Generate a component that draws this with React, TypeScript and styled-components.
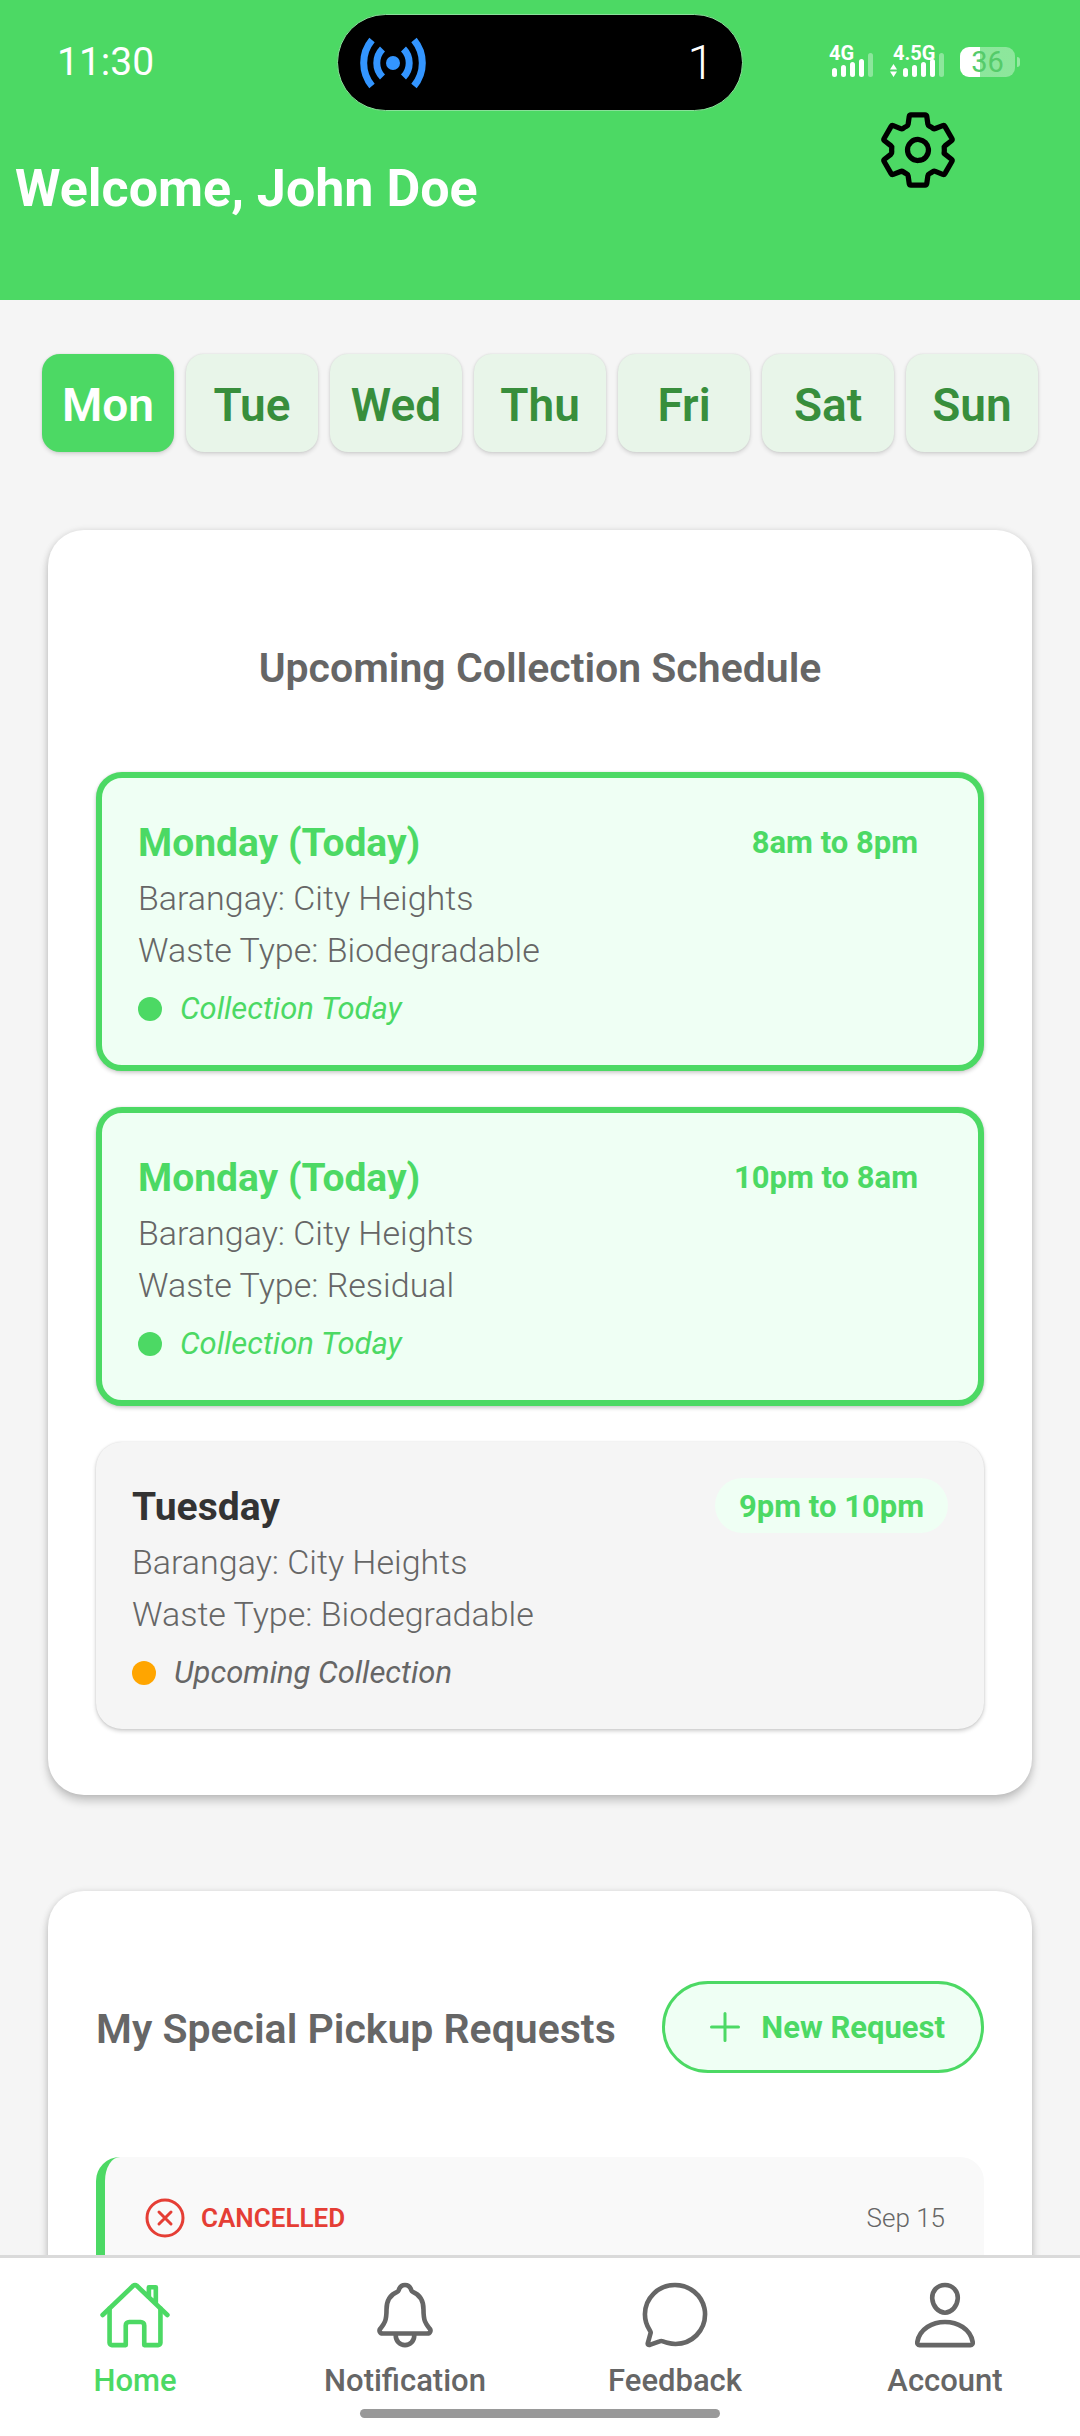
import React from 'react';
import styled, { createGlobalStyle, css } from 'styled-components';
import {
  IoAddOutline,
  IoChatbubbleOutline,
  IoCloseCircleOutline,
  IoHomeOutline,
  IoNotificationsOutline,
  IoPersonOutline,
  IoSettingsOutline,
} from 'react-icons/io5';

const green = '#4CD964';
const mint = '#EFFFF4';
const grey = '#666666';

const GlobalStyle = createGlobalStyle`
  * { box-sizing: border-box; }
  body {
    margin: 0;
    background: #f5f5f5;
    font-family: Roboto, 'Liberation Sans', sans-serif;
    -webkit-font-smoothing: antialiased;
  }
  h1, h2, h3, p, ul { margin: 0; padding: 0; }
  ul { list-style: none; }
  button { font-family: inherit; cursor: pointer; }
`;

const Screen = styled.div`
  display: flex;
  flex-direction: column;
  height: 100vh;
  overflow: hidden;
`;

const Header = styled.header`
  flex: none;
  height: 300px;
  background: ${green};
  color: #fff;
`;

const StatusBar = styled.div`
  display: grid;
  grid-template-columns: 1fr 406px 1fr;
  grid-template-rows: 91px;
  align-items: center;
  padding-top: 17px;
`;

const Clock = styled.time`
  padding: 0 0 2px 57px;
  font-size: 39px;
  line-height: 48px;
`;

const Island = styled.div`
  display: flex;
  align-items: center;
  justify-content: space-between;
  height: 97px;
  padding: 0 28px 0 20px;
  border: 1px solid #8ae09a;
  border-radius: 49px;
  background: #000;
  font-size: 48px;
  font-weight: 300;
`;

const Indicators = styled.div`
  display: flex;
  justify-content: flex-end;
  align-items: flex-end;
  gap: 16px;
  padding: 0 60px 2px 0;
`;

const Signal = styled.div`
  display: flex;
  flex-direction: column;
  font-size: 20px;
  font-weight: 700;
  line-height: 14px;
`;

const SignalLabel = styled.span<{ $indent?: boolean }>`
  margin-bottom: -7px;
  padding-left: ${(p) => (p.$indent ? '4px' : '0')};
`;

const Battery = styled.div`
  display: flex;
  align-items: center;
  gap: 2px;
  &::after {
    content: '';
    width: 3px;
    height: 10px;
    border-radius: 0 3px 3px 0;
    background: rgba(255, 255, 255, 0.4);
  }
`;

const BatteryCell = styled.div`
  width: 55px;
  height: 30px;
  border-radius: 9px;
  background: linear-gradient(to right, #fff 36%, rgba(255, 255, 255, 0.36) 36%);
  color: #55cb6a;
  font-size: 29px;
  line-height: 31px;
  text-align: center;
`;

const Greeting = styled.div`
  display: flex;
  align-items: flex-start;
  justify-content: space-between;
  padding: 0 120px 0 15px;
`;

const Welcome = styled.h1`
  padding-top: 51px;
  font-size: 52px;
  font-weight: 700;
  line-height: 60px;
`;

const SettingsButton = styled.button`
  display: flex;
  padding: 0;
  border: 0;
  background: none;
  color: #000;
`;

const Content = styled.main`
  flex: 1;
  min-height: 0;
  overflow: hidden auto;
  scrollbar-width: none;
  padding: 54px 48px 0;
`;

const Days = styled.div`
  display: grid;
  grid-template-columns: repeat(7, 1fr);
  gap: 12px;
  margin: 0 -6px 78px;
`;

const Day = styled.button<{ $active: boolean }>`
  height: 98px;
  padding: 4px 0 0;
  border: 0;
  border-radius: 18px;
  background: ${(p) => (p.$active ? green : '#E8F5E9')};
  color: ${(p) => (p.$active ? '#fff' : '#388E3C')};
  font-size: 46px;
  font-weight: 600;
  box-shadow: 0 2px 4px rgba(0, 0, 0, 0.14), 0 0 2px rgba(0, 0, 0, 0.1);
`;

const Card = styled.section`
  margin-bottom: 96px;
  padding: 90px 48px 66px;
  border-radius: 36px;
  background: #fff;
  box-shadow: 0 6px 10px rgba(0, 0, 0, 0.2), 0 0 6px rgba(0, 0, 0, 0.1);
`;

const CardTitle = styled.h2<{ $centered?: boolean }>`
  padding-top: 3px;
  color: ${grey};
  font-size: 41px;
  font-weight: 600;
  line-height: 58px;
  ${(p) =>
    p.$centered &&
    css`
      padding: 19px 0 75px;
      text-align: center;
    `}
`;

const Schedule = styled.ul`
  display: flex;
  flex-direction: column;
  gap: 36px;
`;

const Pickup = styled.li<{ $today: boolean }>`
  padding: 36px;
  border: ${(p) => (p.$today ? `6px solid ${green}` : '0')};
  border-radius: 26px;
  background: ${(p) => (p.$today ? mint : '#f5f5f5')};
  box-shadow: 0 2px 4px rgba(0, 0, 0, 0.2), 0 0 2px rgba(0, 0, 0, 0.1);
`;

const PickupHead = styled.div`
  display: flex;
  align-items: center;
  justify-content: space-between;
  margin-bottom: 3px;
`;

const PickupDay = styled.h3<{ $today: boolean }>`
  padding-top: 2px;
  color: ${(p) => (p.$today ? green : '#333')};
  font-size: 39px;
  font-weight: 700;
`;

const Hours = styled.span`
  padding: 10px 24px 8px;
  border-radius: 28px;
  background: ${mint};
  color: ${green};
  font-size: 31px;
  font-weight: 700;
  line-height: 37px;
`;

const Detail = styled.p`
  color: ${grey};
  font-size: 34px;
  font-weight: 300;
  line-height: 52px;
`;

const Status = styled.p<{ $today: boolean }>`
  display: flex;
  align-items: center;
  gap: 18px;
  margin-top: 13px;
  color: ${(p) => (p.$today ? green : grey)};
  font-size: 31px;
  font-style: italic;
  line-height: 40px;
  &::before {
    content: '';
    width: 24px;
    height: 24px;
    border-radius: 50%;
    background: ${(p) => (p.$today ? green : '#FFA500')};
  }
`;

const CardHead = styled.div`
  display: flex;
  align-items: center;
  justify-content: space-between;
  margin-bottom: 84px;
`;

const NewRequest = styled.button`
  display: flex;
  align-items: center;
  gap: 12px;
  height: 92px;
  padding: 0 36px;
  border: 3px solid ${green};
  border-radius: 46px;
  background: ${mint};
  color: ${green};
  font-size: 31px;
  font-weight: 700;
`;

const Request = styled.article`
  display: flex;
  align-items: center;
  justify-content: space-between;
  padding: 37px 39px 96px 36px;
  border-left: 9px solid ${green};
  border-radius: 24px;
  background: #f9f9f9;
`;

const RequestState = styled.span`
  display: flex;
  align-items: center;
  gap: 12px;
  color: #E53E35;
  font-size: 26px;
  font-weight: 600;
`;

const RequestDate = styled.time`
  color: ${grey};
  font-size: 26px;
  font-weight: 300;
`;

const BottomBar = styled.footer`
  flex: none;
  padding-bottom: 18px;
  border-top: 3px solid #dadada;
  background: #fff;
  z-index: 1;
`;

const Tabs = styled.nav`
  display: grid;
  grid-template-columns: repeat(4, 1fr);
`;

const Tab = styled.a<{ $active?: boolean }>`
  display: flex;
  flex-direction: column;
  align-items: center;
  gap: 9px;
  padding: 20px 0 8px;
  color: ${(p) => (p.$active ? green : grey)};
  font-size: 31px;
  font-weight: 500;
  line-height: 40px;
  text-decoration: none;
`;

const HomeIndicator = styled.div`
  width: 360px;
  height: 9px;
  margin: 0 auto;
  border-radius: 5px;
  background: #999;
`;

function BroadcastIcon() {
  return (
    <svg width="70" height="54" viewBox="-35 -27 70 54" fill="none" stroke="#3395FF" strokeWidth="7" aria-hidden="true">
      <circle r="7" fill="#3395FF" stroke="none" />
      <path d="M-10.500-14A20 20 0 0 0-10.500 14M10.500-14A20 20 0 0 1 10.500 14" />
      <path d="M-21-23A36 36 0 0 0-21 23M21-23A36 36 0 0 1 21 23" />
    </svg>
  );
}

function SignalBars({ data }: { data?: boolean }) {
  const tops = [15, 12, 9, 6, 0];
  return (
    <svg width={data ? 55 : 44} height="24" viewBox={data ? '-14 0 55 24' : '-3 0 44 24'} fill="#fff" aria-hidden="true">
      {tops.map((top, i) => (
        <rect key={top} x={i * 9} y={top} width="5" height={24 - top} rx="2.500" opacity={i === 4 ? 0.36 : 1} />
      ))}
      {data && <path d="M-13 16.500L-9.500 11L-6 16.500ZM-13 18.500L-9.500 24L-6 18.500Z" />}
    </svg>
  );
}

const days = ['Mon', 'Tue', 'Wed', 'Thu', 'Fri', 'Sat', 'Sun'];

const pickups = [
  { day: 'Monday', hours: '8am to 8pm', type: 'Biodegradable', today: true },
  { day: 'Monday', hours: '10pm to 8am', type: 'Residual', today: true },
  { day: 'Tuesday', hours: '9pm to 10pm', type: 'Biodegradable', today: false },
];

const tabs = [
  { label: 'Home', Icon: IoHomeOutline },
  { label: 'Notification', Icon: IoNotificationsOutline },
  { label: 'Feedback', Icon: IoChatbubbleOutline },
  { label: 'Account', Icon: IoPersonOutline },
];

export default function App() {
  const [selected, setSelected] = React.useState('Mon');
  return (
    <Screen>
      <GlobalStyle />
      <Header>
        <StatusBar>
          <Clock>11:30</Clock>
          <Island>
            <BroadcastIcon />
            <span>1</span>
          </Island>
          <Indicators>
            <Signal>
              <SignalLabel>4G</SignalLabel>
              <SignalBars />
            </Signal>
            <Signal>
              <SignalLabel $indent>4.5G</SignalLabel>
              <SignalBars data />
            </Signal>
            <Battery>
              <BatteryCell>36</BatteryCell>
            </Battery>
          </Indicators>
        </StatusBar>
        <Greeting>
          <Welcome>Welcome, John Doe</Welcome>
          <SettingsButton aria-label="Settings">
            <IoSettingsOutline size={84} />
          </SettingsButton>
        </Greeting>
      </Header>

      <Content>
        <Days>
          {days.map((day) => (
            <Day key={day} $active={day === selected} aria-pressed={day === selected} onClick={() => setSelected(day)}>
              {day}
            </Day>
          ))}
        </Days>

        <Card>
          <CardTitle $centered>Upcoming Collection Schedule</CardTitle>
          <Schedule>
            {pickups.map((p) => (
              <Pickup key={p.hours} $today={p.today}>
                <PickupHead>
                  <PickupDay $today={p.today}>{p.today ? `${p.day} (Today)` : p.day}</PickupDay>
                  <Hours>{p.hours}</Hours>
                </PickupHead>
                <Detail>Barangay: City Heights</Detail>
                <Detail>Waste Type: {p.type}</Detail>
                <Status $today={p.today}>{p.today ? 'Collection Today' : 'Upcoming Collection'}</Status>
              </Pickup>
            ))}
          </Schedule>
        </Card>

        <Card>
          <CardHead>
            <CardTitle>My Special Pickup Requests</CardTitle>
            <NewRequest>
              <IoAddOutline size={48} />
              New Request
            </NewRequest>
          </CardHead>
          <Request>
            <RequestState>
              <IoCloseCircleOutline size={48} />
              CANCELLED
            </RequestState>
            <RequestDate>Sep 15</RequestDate>
          </Request>
        </Card>
      </Content>

      <BottomBar>
        <Tabs>
          {tabs.map(({ label, Icon }, i) => (
            <Tab key={label} href={`#${label.toLowerCase()}`} $active={i === 0}>
              <Icon size={74} />
              {label}
            </Tab>
          ))}
        </Tabs>
        <HomeIndicator />
      </BottomBar>
    </Screen>
  );
}
